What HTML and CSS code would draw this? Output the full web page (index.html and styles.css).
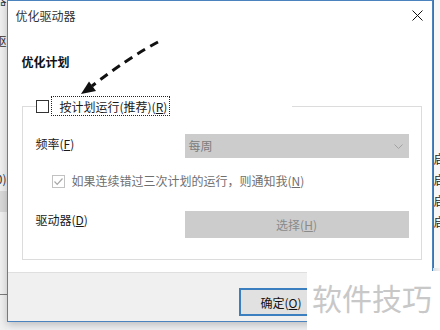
FILE: index.html
```html
<!DOCTYPE html>
<html lang="zh-CN">
<head>
  <meta charset="UTF-8">
  <title>优化驱动器</title>
  <link rel="stylesheet" href="styles.css">
</head>
<body>
  <div class="desk">
    <div class="edge edge-left">
      <div class="peek peek-top"><span>动器</span></div>
      <div class="peek peek-mid"><span>驱</span></div>
      <div class="peek peek-low"><span>(0)</span></div>
      <div class="band"></div>
      <div class="rule"></div>
    </div>

    <div class="dialog">
      <div class="titlebar">
        <span class="title">优化驱动器</span>
        <svg class="close" width="11" height="11" viewBox="0 0 11 11">
          <path d="M0.5 0.5 L10.5 10.5 M10.5 0.5 L0.5 10.5" stroke="#111" stroke-width="1" fill="none"/>
        </svg>
      </div>

      <div class="content">
        <h2 class="section">优化计划</h2>

        <fieldset class="group">
          <legend class="group-head">
            <span class="box"></span>
            <span class="focus">按计划运行(推荐)(<u>R</u>)</span>
          </legend>

          <div class="row row-freq">
            <span class="label">频率(<u>F</u>)</span>
            <div class="select">
              <span>每周</span>
              <svg class="chevron" width="9" height="5" viewBox="0 0 9 5">
                <path d="M0.5 0.5 L4.5 4.5 L8.5 0.5" stroke="#a3a3a3" stroke-width="1" fill="none"/>
              </svg>
            </div>
          </div>

          <div class="check-row">
            <span class="box box-off">
              <svg width="11" height="11" viewBox="0 0 11 11">
                <path d="M1.5 5.5 L4.2 8.3 L9.5 2.5" stroke="#a9a9a9" stroke-width="1.2" fill="none"/>
              </svg>
            </span>
            <span class="muted">如果连续错过三次计划的运行，则通知我(<u>N</u>)</span>
          </div>

          <div class="row row-drive">
            <span class="label">驱动器(<u>D</u>)</span>
            <div class="btn-wide">选择(<u>H</u>)</div>
          </div>
        </fieldset>
      </div>

      <div class="footer">
        <button class="btn btn-default">确定(<u>O</u>)</button>
      </div>
    </div>

    <div class="edge edge-right">
      <span>启</span>
      <span>启</span>
      <span>启</span>
      <span>启</span>
    </div>
  </div>

  <!-- hint arrow drawn over the dialog -->
  <svg class="arrow" width="440" height="330" viewBox="0 0 440 330">
    <path d="M158 42 Q128 58 92 86" stroke="#111" stroke-width="3" fill="none" stroke-dasharray="9 6"/>
    <polygon points="81,94 89,81.5 96,91" fill="#111"/>
  </svg>

  <div class="watermark">软件技巧</div>
</body>
</html>
```

FILE: styles.css
```css
/* Global */
body {
  margin: 0;
  width: 440px;
  height: 330px;
  overflow: hidden;
  position: relative;
  background: #f1f2f4;
  font-family: "Noto Sans CJK SC", "Liberation Sans", sans-serif;
  font-size: 12px;
  line-height: 16px;
  color: #1a1a1a;
}

u {
  text-decoration: underline;
  text-underline-offset: 1px;
}

.desk {
  display: flex;
  height: 330px;
}

/* Windows peeking out behind the dialog */
.edge {
  overflow: hidden;
  display: flex;
  flex-direction: column;
}

.edge-left {
  width: 7px;
  background: #f0f0f0;
  color: #333;
}

.peek {
  display: flex;
  justify-content: flex-end;
  white-space: nowrap;
}

.peek-top {
  margin-top: -8px;
}

.peek-mid {
  margin-top: 25px;
}

.peek-low {
  margin-top: 122px;
}

.band {
  height: 21px;
  margin-top: 4px;
  background: #d9d9d9;
}

.rule {
  height: 1px;
  margin-top: 82px;
  background: #7a7a7a;
}

.edge-right {
  width: 8px;
  padding-top: 148px;
  background: #f7f7f7;
  border-left: 1px solid #3f72a6;
  box-sizing: border-box;
  color: #222;
  line-height: 21px;
  height: 268px;
}

/* Dialog */
.dialog {
  width: 426px;
  height: 322px;
  box-sizing: border-box;
  border: 1px solid #4a83bd;
  background: #fff;
  display: flex;
  flex-direction: column;
  box-shadow: 0 3px 8px rgba(0, 0, 0, 0.22);
}

.titlebar {
  height: 29px;
  flex-shrink: 0;
  display: flex;
  align-items: center;
  justify-content: space-between;
  padding: 0 9px 0 8px;
}

.title {
  color: #333;
}

.content {
  flex: 1;
  padding: 0 10px 0 14px;
}

.section {
  margin: 24px 0 26px;
  font-size: 12px;
  font-weight: bold;
  line-height: 16px;
  color: #111;
}

.group {
  margin: 0;
  padding: 0 12px 21px 13px;
  border: 1px solid #dcdcdc;
  min-width: 0;
}

.group-head {
  width: 256px;
  height: 20px;
  padding: 0;
  display: flex;
  align-items: center;
}

.box {
  width: 13px;
  height: 13px;
  box-sizing: border-box;
  border: 1px solid #333;
  background: #fff;
  flex-shrink: 0;
  display: flex;
  align-items: center;
  justify-content: center;
}

.box-off {
  border-color: #c2c2c2;
}

.focus {
  margin-left: 2px;
  height: 20px;
  box-sizing: border-box;
  border: 1px dotted #222;
  padding: 1px 2px 0 8px;
  line-height: 17px;
  white-space: nowrap;
}

.row {
  display: grid;
  grid-template-columns: 149px 224px;
  align-items: start;
}

.row-freq {
  margin-top: 18px;
}

.row-drive {
  margin-top: 22px;
}

.label {
  padding-top: 2px;
}

.row-drive .label {
  padding-top: 1px;
}

.select {
  height: 24px;
  background: #cccccc;
  color: #7c7c7c;
  display: flex;
  align-items: center;
  padding: 0 6px 0 4px;
}

.chevron {
  margin-left: auto;
}

.check-row {
  margin-top: 15px;
  padding-left: 16px;
  display: flex;
  align-items: center;
  gap: 7px;
}

.muted {
  color: #6f6f6f;
}

.btn-wide {
  height: 27px;
  background: #cccccc;
  color: #8a8a8a;
  display: flex;
  align-items: center;
  justify-content: center;
}

/* Footer */
.footer {
  height: 49px;
  flex-shrink: 0;
  box-sizing: border-box;
  border-top: 1px solid #dfdfdf;
  background: #f0f0f0;
  display: flex;
  justify-content: flex-end;
  align-items: flex-start;
  padding: 15px 108px 0 0;
}

.btn {
  width: 85px;
  height: 28px;
  box-sizing: border-box;
  border: 1px solid #adadad;
  background: #e1e1e1;
  font-family: inherit;
  font-size: 12px;
  color: #111;
  padding: 0;
}

.btn-default {
  border: 2px solid #3b7fc0;
}

/* Overlays */
.arrow {
  position: absolute;
  left: 0;
  top: 0;
  pointer-events: none;
}

.watermark {
  position: absolute;
  left: 307px;
  top: 271px;
  width: 133px;
  height: 59px;
  box-sizing: border-box;
  padding-left: 5px;
  background: #fff;
  color: #c8c8c8;
  font-size: 30px;
  line-height: 52px;
  white-space: nowrap;
}
```
